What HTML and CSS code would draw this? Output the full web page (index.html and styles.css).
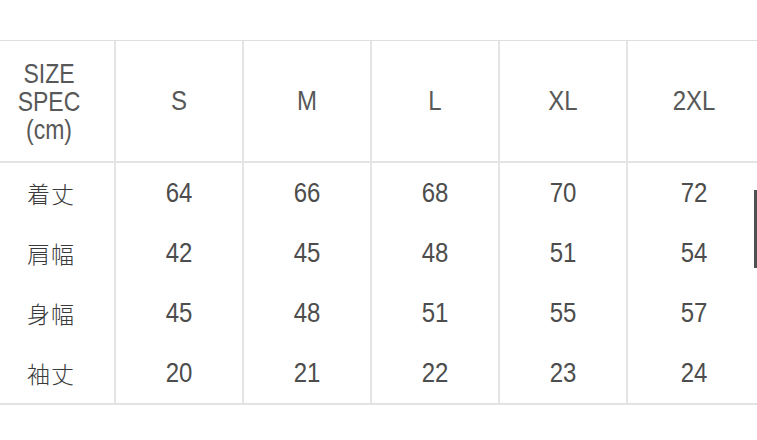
FILE: index.html
```html
<!DOCTYPE html>
<html lang="ja">
<head>
<meta charset="utf-8">
<title>Size Spec</title>
<link rel="stylesheet" href="styles.css">
</head>
<body>
<div class="page">
  <div class="spec">
    <div class="cell head label"><span class="t">SIZE</span><span class="t">SPEC</span><span class="t">(cm)</span></div>
    <div class="cell head"><span class="t">S</span></div>
    <div class="cell head"><span class="t">M</span></div>
    <div class="cell head"><span class="t">L</span></div>
    <div class="cell head"><span class="t">XL</span></div>
    <div class="cell head last"><span class="t">2XL</span></div>

    <div class="cell name">着丈</div>
    <div class="cell"><span class="t">64</span></div>
    <div class="cell"><span class="t">66</span></div>
    <div class="cell"><span class="t">68</span></div>
    <div class="cell"><span class="t">70</span></div>
    <div class="cell last"><span class="t">72</span></div>

    <div class="cell name">肩幅</div>
    <div class="cell"><span class="t">42</span></div>
    <div class="cell"><span class="t">45</span></div>
    <div class="cell"><span class="t">48</span></div>
    <div class="cell"><span class="t">51</span></div>
    <div class="cell last"><span class="t">54</span></div>

    <div class="cell name">身幅</div>
    <div class="cell"><span class="t">45</span></div>
    <div class="cell"><span class="t">48</span></div>
    <div class="cell"><span class="t">51</span></div>
    <div class="cell"><span class="t">55</span></div>
    <div class="cell last"><span class="t">57</span></div>

    <div class="cell name">袖丈</div>
    <div class="cell"><span class="t">20</span></div>
    <div class="cell"><span class="t">21</span></div>
    <div class="cell"><span class="t">22</span></div>
    <div class="cell"><span class="t">23</span></div>
    <div class="cell last"><span class="t">24</span></div>
  </div>
  <div class="edge-bar"></div>
</div>
</body>
</html>
```
FILE: styles.css
```css
html, body {
  margin: 0;
  padding: 0;
  background: #ffffff;
}
body {
  width: 757px;
  height: 440px;
  overflow: hidden;
  font-family: "Liberation Sans", "Noto Sans CJK JP", sans-serif;
}
.page {
  position: relative;
  width: 757px;
  height: 440px;
  padding-top: 40px;
  box-sizing: border-box;
}
.spec {
  margin-left: -12px;
  width: 772px;
  display: grid;
  grid-template-columns: 128px 128px 128px 128px 128px 132px;
  grid-template-rows: 122px 60px 60px 60px 60px;
  border-top: 1px solid #dedede;
  border-bottom: 2px solid #e2e2e2;
}
.cell {
  display: flex;
  align-items: center;
  justify-content: center;
  border-right: 2px solid #e4e4e4;
  color: #4d4d4d;
  font-size: 24px;
  line-height: 28px;
}
.cell.last {
  border-right: none;
}
.cell.head {
  border-bottom: 2px solid #e4e4e4;
  color: #585858;
}
.t {
  display: inline-block;
  transform: scaleY(1.17);
}
.label {
  flex-direction: column;
  font-size: 23px;
  line-height: 28px;
  padding-top: 2px;
  padding-right: 4px;
}
.name {
  font-family: "Noto Sans CJK JP", sans-serif;
  font-size: 23px;
  font-weight: 300;
  color: #3a3a3a;
  letter-spacing: 1px;
}
.edge-bar {
  position: absolute;
  left: 754px;
  top: 190px;
  width: 3px;
  height: 78px;
  background: #505050;
}
```
